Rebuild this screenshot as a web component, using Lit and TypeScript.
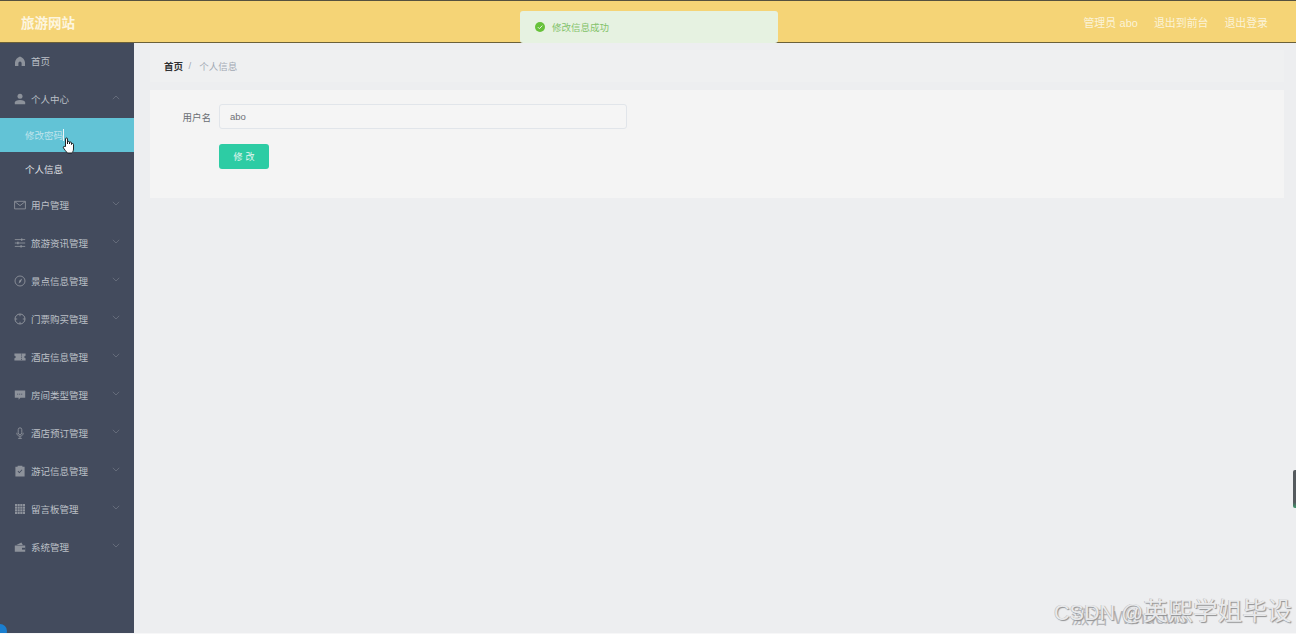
import { LitElement, html, css, svg } from "lit";
import { customElement } from "lit/decorators.js";

const icons: Record<string, unknown> = {
  home: svg`<path fill="currentColor" d="M6 1.400C3.200 2.400 1.300 4.500 1 7.200v3.800h3.400V8.200a1.600 1.600 0 0 1 3.200 0V11H11V7.200C10.700 4.500 8.800 2.400 6 1.400z"/>`,
  user: svg`<circle fill="currentColor" cx="6" cy="3.300" r="2.500"/><path fill="currentColor" d="M.8 11.200V9.400C.8 7.800 3 6.900 6 6.900s5.200.9 5.200 2.500v1.800z"/>`,
  mail: svg`<path fill="none" stroke="currentColor" stroke-width=".9" d="M.6 2.300h10.800v7.600H.6zM.8 2.600 6 6.600l5.200-4"/>`,
  sliders: svg`<path fill="none" stroke="currentColor" stroke-width=".9" d="M.8 2.600h10.400M.8 6h10.400M.8 9.400h10.400"/><path fill="currentColor" d="M7 1.400h1.400v2.400H7zM3.200 4.800h1.400v2.400H3.200zM6.400 8.200h1.400v2.400H6.400z"/>`,
  compass: svg`<circle fill="none" stroke="currentColor" stroke-width=".9" cx="6" cy="6" r="5"/><path fill="currentColor" d="M8.200 3.400 6.800 7 4.600 8.600 5.400 5.600z"/>`,
  aim: svg`<circle fill="none" stroke="currentColor" stroke-width="1" cx="6" cy="6" r="5"/><path fill="none" stroke="currentColor" stroke-width=".9" d="M6 1v2.200M6 8.800V11M1 6h2.200M8.800 6H11"/>`,
  ticket: svg`<path fill="currentColor" d="M.4 2.400h11.200v2.300a1.300 1.300 0 0 0 0 2.600v2.300H.4V7.300a1.300 1.300 0 0 0 0-2.600z"/><path stroke="#434b5d" stroke-width=".8" stroke-dasharray="1 .8" d="M7.500 2.600v6.800"/>`,
  chat: svg`<path fill="currentColor" d="M.8 1.600h10.400v7.200H6.400L4.600 10.800V8.800H.8z"/><path stroke="#434b5d" stroke-width=".9" stroke-dasharray="1 1" d="M3.200 5.200h6"/>`,
  mic: svg`<rect fill="none" stroke="currentColor" stroke-width=".9" x="4.200" y=".8" width="3.600" height="6.800" rx="1.800"/><path fill="none" stroke="currentColor" stroke-width=".9" d="M2.800 5.800c0 2.200 1.400 3.400 3.200 3.400s3.200-1.200 3.200-3.400M6 9.200v2.200M4.200 11.400h3.600"/>`,
  clip: svg`<path fill="currentColor" fill-rule="evenodd" d="M1.400 1.800h2.200V.8h4.800v1h2.200v9.800H1.400zM3.600 6.400l1.800 1.900 3-3.200-.6-.6-2.400 2.500-1.200-1.200z"/>`,
  grid: svg`<path fill="currentColor" d="M1 1h10v10H1z"/><path stroke="#434b5d" stroke-width=".5" d="M3.500 1v10M6 1v10M8.500 1v10M1 3.500h10M1 6h10M1 8.500h10"/>`,
  wallet: svg`<path fill="currentColor" d="M.8 4.600h10.400v6.200H.8zM2.400 4l5-2.600L8.800 4z"/><path fill="#434b5d" d="M8 6.800h3.200v1.800H8z"/>`,
};

const icon = (n: string) => html`<svg class="icon" viewBox="0 0 12 12">${icons[n]}</svg>`;
const chevron = (up = false) =>
  html`<svg class="chev" viewBox="0 0 8 5"><path fill="none" stroke="currentColor" stroke-width=".8" d=${up ? "M.8 4.200 4 1l3.200 3.200" : "M.8 .8 4 4l3.200-3.200"} /></svg>`;

const rest: [string, string][] = [
  ["mail", "用户管理"], ["sliders", "旅游资讯管理"], ["compass", "景点信息管理"], ["aim", "门票购买管理"],
  ["ticket", "酒店信息管理"], ["chat", "房间类型管理"], ["mic", "酒店预订管理"], ["clip", "游记信息管理"],
  ["grid", "留言板管理"], ["wallet", "系统管理"],
];

@customElement("app-root")
export class AppRoot extends LitElement {
  static styles = css`
    :host { display: block; position: relative; width: 100%; height: 100vh; overflow: hidden; background: #edeef0; font-family: "Liberation Sans", "Noto Sans CJK SC", sans-serif; }
    * { box-sizing: border-box; }
    .page { display: flex; flex-direction: column; height: 100%; }
    header { flex: none; height: 43px; display: flex; align-items: center; justify-content: space-between; padding: 0 28px 0 21px; background: #f5d476; border-top: 1px solid #55513f; border-bottom: 1px solid #6b6038; color: #fbf3d8; }
    .brand { font-size: 13.5px; font-weight: 700; color: #fdf6e0; }
    .links { display: flex; gap: 16px; font-size: 10.9px; }
    .links span:first-child { letter-spacing: .1px; }
    .body { flex: 1; display: flex; min-height: 0; margin-top: -1px; }
    aside { flex: none; width: 134px; background: #434b5d; color: #bcc0c7; font-size: 9.5px; border-top: 1px solid #6b6038; }
    .item { height: 38px; display: flex; align-items: center; padding: 0 14px; gap: 5px; }
    .item:first-child { height: 37px; padding-bottom: 1px; }
    .icon { width: 12px; height: 12px; color: #8d929b; flex: none; }
    .label { flex: 1; }
    .chev { width: 8px; height: 5px; color: #6d7382; margin-top: -4px; }
    .sub { height: 34px; display: flex; align-items: center; padding-left: 25px; color: #e0e2e6; }
    .sub.active { background: #62c3d6; color: #bfe3ec; position: relative; }
    .caret { width: 1px; height: 12px; background: #e8f4f7; }
    .hand { position: absolute; left: 62px; top: 19px; width: 14px; height: 17px; }
    main { flex: 1; padding: 8px 12px 0 16px; min-width: 0; }
    .crumb { height: 32px; display: flex; align-items: center; padding: 0 14px 1px; font-size: 9.5px; background: #eff0f1; color: #a2a9b4; }
    .crumb b { color: #303133; font-weight: 700; }
    .crumb .sep { margin: 0 8px 0 5.5px; }
    .card { margin-top: 8px; height: 108px; background: #f4f4f4; display: flex; flex-direction: column; padding-top: 14px; }
    .row { display: flex; align-items: center; }
    .name { width: 61px; text-align: right; font-size: 9.5px; color: #6a6d72; margin-right: 8px; }
    .input { width: 408px; height: 25px; border: 1px solid #e1e5ea; border-radius: 3px; background: #f5f5f5; padding-left: 10px; font-size: 9.5px; display: flex; align-items: center; color: #6e7075; }
    .btn { margin: 15px 0 0 69px; width: 50px; height: 25px; border-radius: 3px; background: #2dcca4; color: #e4f7f1; font-size: 9px; display: flex; align-items: center; justify-content: center; letter-spacing: 3px; padding-left: 3px; }
    .toast { position: absolute; left: 520px; top: 11px; width: 258px; height: 32px; background: #e6f2e1; border-radius: 3px; display: flex; align-items: center; gap: 7px; padding-left: 15px; color: #83c26a; font-size: 9.5px; }
    .toast svg { width: 10px; height: 10px; }
    .wm { position: absolute; left: 1054px; top: 598px; font-size: 24.8px; line-height: 28px; white-space: nowrap; color: #e8e9eb; text-shadow: 1px 1px 1px #8f9092, -0.5px -0.5px 0 #b5b6b8; }
    .wm span { font-size: 21.6px; }
    .win { position: absolute; left: 1071px; top: 607px; font-size: 18.5px; line-height: 22px; white-space: nowrap; color: #b5b6b9; }
    .dot { position: absolute; left: -7px; top: 624px; width: 14px; height: 14px; border-radius: 50%; background: #1b7fd0; }
    .edge { position: absolute; left: 1293px; top: 470px; width: 3px; height: 38px; border-radius: 2px 0 0 2px; background: linear-gradient(#555a5e 85%, #3f9a6c); }
    .foot { position: absolute; left: 0; right: 0; bottom: 0; height: 1px; background: #f7f7f8; }
  `;

  render() {
    return html`
      <div class="page">
        <header>
          <div class="brand">旅游网站</div>
          <div class="links"><span>管理员 abo</span><span>退出到前台</span><span>退出登录</span></div>
        </header>
        <div class="body">
          <aside>
            <div class="item">${icon("home")}<span class="label">首页</span></div>
            <div class="item">${icon("user")}<span class="label">个人中心</span>${chevron(true)}</div>
            <div class="sub active">修改密码<span class="caret"></span>
              <svg class="hand" viewBox="0 0 14 17">
                <path fill="#fff" stroke="#111" stroke-width=".9" stroke-linejoin="round" d="M3.500 9.500V2a1 1 0 0 1 2 0v5V5.400a1 1 0 0 1 2 0V7 6a1 1 0 0 1 2 0v1.500a1 1 0 0 1 2 0V12c0 2-1 3.500-2 4H5.500C4 14.500 2.800 13 1.500 11c-.7-1.200.6-2.200 1.500-1.200z"/>
              </svg>
            </div>
            <div class="sub">个人信息</div>
            ${rest.map(([i, t]) => html`<div class="item">${icon(i)}<span class="label">${t}</span>${chevron()}</div>`)}
          </aside>
          <main>
            <div class="crumb"><b>首页</b><span class="sep">/</span><span>个人信息</span></div>
            <div class="card">
              <div class="row"><div class="name">用户名</div><div class="input">abo</div></div>
              <div class="btn">修改</div>
            </div>
          </main>
        </div>
      </div>
      <div class="toast">
        <svg viewBox="0 0 10 10"><circle cx="5" cy="5" r="5" fill="#67c23a"/><path d="M2.800 5.100 4.400 6.700 7.300 3.600" fill="none" stroke="#e6f2e1" stroke-width="1"/></svg>
        修改信息成功
      </div>
      <div class="win">激活 Windows</div>
      <div class="wm"><span>CSDN @</span>英熙学姐毕设</div>
      <div class="edge"></div>
      <div class="dot"></div>
      <div class="foot"></div>
    `;
  }
}
